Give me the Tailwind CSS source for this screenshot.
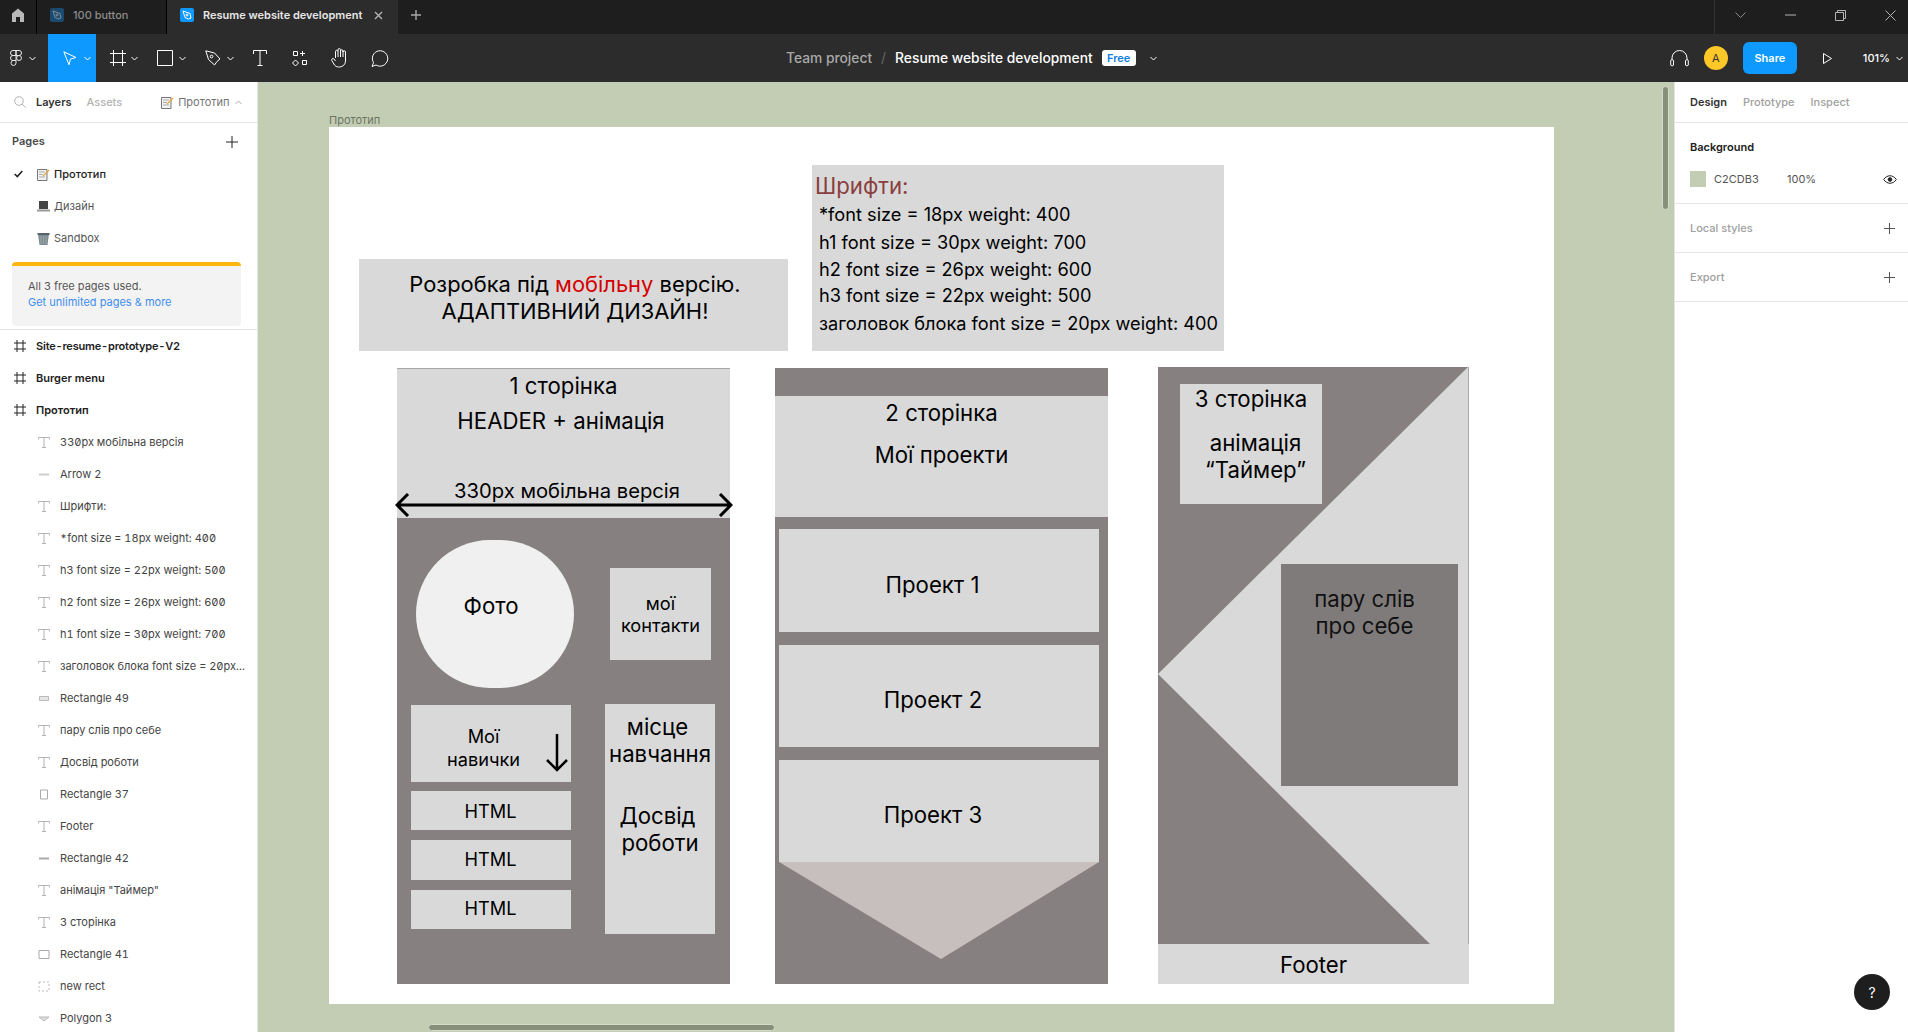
<!DOCTYPE html>
<html lang="uk">
<head>
  <meta charset="UTF-8" />
  <title>Resume website development – Figma</title>
  <script src="https://cdn.jsdelivr.net/npm/@tailwindcss/browser@4"></script>
</head>
<body class="h-screen w-screen overflow-hidden flex flex-col bg-white font-['Inter','Liberation_Sans',sans-serif] text-[11px] text-[#333]">

  <!-- tab bar -->
  <div class="h-[34px] shrink-0 flex items-stretch bg-[#1e1e1e] text-[11px]">
    <div class="w-[36px] flex items-center justify-center border-r border-[#000] box-content pb-[4px]">
      <svg width="14" height="14" viewBox="0 0 14 14"><path d="M7 .5 13 5.5V14H9V9H5V14H1V5.5Z" fill="#b8b8b8"/></svg>
    </div>
    <div class="w-[130px] flex items-center pl-[13px] border-r border-[#000] text-[#8c8c8c] font-medium pb-[4px]">
      <span class="w-[14px] h-[14px] rounded-[2px] bg-[#1c4a6e] flex items-center justify-center">
        <svg width="10" height="10" viewBox="0 0 10 10" fill="none" stroke="#7d8e9b"><path d="M1 1 8 3.5 9 8 6.5 9 3 7.5Z"/><circle cx="5" cy="5" r="1"/></svg>
      </span>
      <span class="ml-[9px]">100 button</span>
    </div>
    <div class="w-[231px] flex items-center pl-[13px] bg-[#2c2c2c] text-[#e6e6e6] font-semibold pb-[4px]">
      <span class="w-[14px] h-[14px] rounded-[2px] bg-[#0d99ff] flex items-center justify-center">
        <svg width="10" height="10" viewBox="0 0 10 10" fill="none" stroke="#fff"><path d="M1 1 8 3.5 9 8 6.5 9 3 7.5Z"/><circle cx="5" cy="5" r="1"/></svg>
      </span>
      <span class="ml-[9px] w-[171px] whitespace-nowrap">Resume website development</span>
      <svg width="9" height="9" viewBox="0 0 9 9" stroke="#b3b3b3" stroke-width="1.4"><path d="M1 1 8 8M8 1 1 8"/></svg>
    </div>
    <div class="w-[35px] flex items-center justify-center pb-[4px]">
      <svg width="10" height="10" viewBox="0 0 10 10" stroke="#a8a8a8" stroke-width="1.4"><path d="M5 0V10M0 5H10"/></svg>
    </div>
    <div class="ml-auto w-[194px] border-l border-[#333] flex items-center gap-[39px] pl-[20px] pb-[4px]">
      <svg width="11" height="7" viewBox="0 0 11 7" fill="none" stroke="#8a8a8a"><path d="M.5 .5 5.5 5.5 10.5 .5"/></svg>
      <svg width="11" height="2" viewBox="0 0 11 2" stroke="#b3b3b3"><path d="M0 1H11"/></svg>
      <svg width="11" height="11" viewBox="0 0 11 11" fill="none" stroke="#b3b3b3"><path d="M.5 2.5H8.5V10.5H.5ZM2.5 2.5V.5H10.5V8.5H8.5"/></svg>
      <svg width="11" height="11" viewBox="0 0 11 11" stroke="#b3b3b3"><path d="M.5 .5 10.5 10.5M10.5 .5 .5 10.5"/></svg>
    </div>
  </div>

  <!-- toolbar -->
  <div class="h-[48px] shrink-0 flex items-center bg-[#2c2c2c] text-white">
    <div class="w-[48px] h-full flex items-center pl-[10px]">
      <svg width="12" height="16" viewBox="0 0 12 16" fill="none" stroke="#e6e6e6"><path d="M6 .5H3A2.5 2.5 0 0 0 3 5.5H6ZM6 .5H9A2.5 2.5 0 0 1 9 5.5H6ZM6 5.5H3A2.5 2.5 0 0 0 3 10.5H6ZM6 10.5H3A2.5 2.5 0 1 0 6 13ZM11.5 8A2.5 2.5 0 1 1 6.5 8 2.5 2.5 0 0 1 11.5 8Z"/></svg>
      <svg class="ml-[7px]" width="7" height="5" viewBox="0 0 7 5" fill="none" stroke="#fff"><path d="M.5 1 3.5 4 6.5 1"/></svg>
    </div>
    <div class="w-[48px] h-full bg-[#0d99ff] flex items-center pl-[15px]">
      <svg width="14" height="15" viewBox="0 0 14 15" fill="none" stroke="#fff"><path d="M.8 .8 13 6.5 7.5 8 6 13.8Z"/></svg>
      <svg class="ml-[7px]" width="7" height="5" viewBox="0 0 7 5" fill="none" stroke="#fff"><path d="M.5 1 3.5 4 6.5 1"/></svg>
    </div>
    <div class="w-[48px] h-full flex items-center pl-[14px]">
      <svg width="16" height="16" viewBox="0 0 16 16" stroke="#fff"><path d="M3.5 0V16M12.5 0V16M0 3.5H16M0 12.5H16"/></svg>
      <svg class="ml-[5px]" width="7" height="5" viewBox="0 0 7 5" fill="none" stroke="#fff"><path d="M.5 1 3.5 4 6.5 1"/></svg>
    </div>
    <div class="w-[48px] h-full flex items-center pl-[13px]">
      <svg width="16" height="16" viewBox="0 0 16 16" fill="none" stroke="#fff"><path d="M.5 .5H15.5V15.5H.5Z"/></svg>
      <svg class="ml-[6px]" width="7" height="5" viewBox="0 0 7 5" fill="none" stroke="#fff"><path d="M.5 1 3.5 4 6.5 1"/></svg>
    </div>
    <div class="w-[48px] h-full flex items-center pl-[13px]">
      <svg width="16" height="16" viewBox="0 0 16 16" fill="none" stroke="#fff"><path d="M.8 .8 9.5 3 15 9 12 11.5 9.5 15 3.5 9.5Z"/><circle cx="6.5" cy="6.5" r="1.4"/></svg>
      <svg class="ml-[6px]" width="7" height="5" viewBox="0 0 7 5" fill="none" stroke="#fff"><path d="M.5 1 3.5 4 6.5 1"/></svg>
    </div>
    <div class="w-[40px] h-full flex items-center justify-center">
      <svg width="14" height="16" viewBox="0 0 14 16" fill="none" stroke="#fff"><path d="M.5 4V.5H13.5V4M7 .5V15.5M4.5 15.5H9.5"/></svg>
    </div>
    <div class="w-[40px] h-full flex items-center justify-center">
      <svg width="16" height="16" viewBox="0 0 16 16" fill="none" stroke="#fff"><path d="M1.5 1.5H5.5V5.5H1.5ZM10.5 1V6M8 3.5H13M3.5 10 6.5 13 3.5 16 .5 13ZM10.5 10.5H14.5V14.5H10.5Z"/></svg>
    </div>
    <div class="w-[40px] h-full flex items-center justify-center">
      <svg width="18" height="20" viewBox="0 0 18 20" fill="none" stroke="#fff"><path d="M4.5 10V3.5A1.2 1.2 0 0 1 7 3.5V1.8A1.2 1.2 0 0 1 9.5 1.8V3A1.2 1.2 0 0 1 12 3V4A1.2 1.2 0 0 1 14.5 4V13A6 6 0 0 1 8.5 19H7.500A5 5 0 0 1 3.500 17L.8 12.500C0 11 2 9.800 3 11L4.500 13M7 3.500V9M9.500 2V9M12 3V9"/></svg>
    </div>
    <div class="w-[40px] h-full flex items-center justify-center">
      <svg width="18" height="17" viewBox="0 0 18 17" fill="none" stroke="#fff"><path d="M1 16.500 2.500 12.500A7.700 7.700 0 1 1 5 15Z" stroke-linejoin="round"/></svg>
    </div>
    <div class="ml-[386px] flex items-center text-[13.8px] font-medium whitespace-nowrap">
      <span class="text-[#a8a8a8]">Team project</span>
      <span class="text-[#666] mx-[9px] font-normal">/</span>
      <span class="text-white">Resume website development</span>
      <span class="ml-[9px] w-[34px] h-[16px] rounded-[3px] bg-white text-[#0d7de0] text-[11px] font-semibold flex items-center justify-center">Free</span>
      <svg class="ml-[14px]" width="7" height="5" viewBox="0 0 7 5" fill="none" stroke="#fff"><path d="M.5 1 3.5 4 6.5 1"/></svg>
    </div>
    <div class="ml-auto flex items-center">
      <svg width="19" height="18" viewBox="0 0 19 18" fill="none" stroke="#fff"><path d="M2 11V9A7.500 7.500 0 0 1 17 9V11M.7 11.500C.7 10.500 3.500 10.500 3.500 11.500V16C3.500 17 .7 17 .7 16ZM15.500 11.500C15.500 10.500 18.300 10.500 18.300 11.500V16C18.300 17 15.500 17 15.500 16Z"/></svg>
      <span class="ml-[15px] w-[24px] h-[24px] rounded-full bg-[#ffc727] text-[#333] text-[11px] flex items-center justify-center">A</span>
      <span class="ml-[15px] w-[54px] h-[32px] rounded-[6px] bg-[#0d99ff] text-white font-semibold flex items-center justify-center">Share</span>
      <svg class="ml-[26px]" width="9" height="11" viewBox="0 0 9 11" fill="none" stroke="#fff"><path d="M.5 .5 8.500 5.500 .5 10.500Z"/></svg>
      <span class="ml-[31px] font-medium">101%</span>
      <svg class="ml-[6px] mr-[5px]" width="7" height="5" viewBox="0 0 7 5" fill="none" stroke="#fff"><path d="M.5 1 3.5 4 6.5 1"/></svg>
    </div>
  </div>

  <!-- body -->
  <div class="flex-1 min-h-0 flex">

    <!-- left panel -->
    <aside class="w-[258px] shrink-0 border-r border-[#e5e5e5] bg-white overflow-hidden">
      <div class="h-[41px] flex items-center border-b border-[#e5e5e5] pl-[14px]">
        <svg width="12" height="12" viewBox="0 0 12 12" fill="none" stroke="#b3b3b3"><circle cx="5" cy="5" r="4.300"/><path d="M8 8 11.500 11.500"/></svg>
        <span class="ml-[10px] font-semibold text-[#333]">Layers</span>
        <span class="ml-[15px] font-medium text-[#b3b3b3]">Assets</span>
        <svg class="ml-[39px]" width="13" height="13" viewBox="0 0 13 13"><path d="M.5 1.500H10V12.500H.5Z" fill="#f2f2f2" stroke="#777"/><path d="M2 4H8M2 6.500H6M2 9H8" stroke="#aaa"/><path d="M5.500 8 11.500 1.500 12.500 2.500 6.500 8.500Z" fill="#e8a33d"/></svg>
        <span class="ml-[4px] text-[#757575]">Прототип</span>
        <svg class="ml-[5px]" width="7" height="5" viewBox="0 0 7 5" fill="none" stroke="#aaa"><path d="M.5 4 3.500 1 6.500 4"/></svg>
      </div>

      <div class="h-[35px] flex items-center justify-between pl-[12px] pr-[19px] pt-[2px] font-semibold text-[#4a4a4a]">
        <span>Pages</span>
        <svg width="12" height="12" viewBox="0 0 12 12" stroke="#222"><path d="M6 0V12M0 6H12"/></svg>
      </div>
      <div class="h-[32px] flex items-center pl-[14px] text-[#222]">
        <svg width="9" height="8" viewBox="0 0 9 8" fill="none" stroke="#222" stroke-width="1.600"><path d="M.7 4 3.300 6.500 8.300 1"/></svg>
        <svg class="ml-[14px]" width="13" height="13" viewBox="0 0 13 13"><path d="M.5 1.500H10V12.500H.5Z" fill="#f2f2f2" stroke="#777"/><path d="M2 4H8M2 6.500H6M2 9H8" stroke="#aaa"/><path d="M5.500 8 11.500 1.500 12.500 2.500 6.500 8.500Z" fill="#e8a33d"/></svg>
        <span class="ml-[4px] font-medium">Прототип</span>
      </div>
      <div class="h-[32px] flex items-center pl-[37px] text-[#555]">
        <svg width="13" height="11" viewBox="0 0 13 11"><path d="M2 0H11V8H2Z" fill="#444"/><path d="M0 8.500H13V10.500H0Z" fill="#999"/></svg>
        <span class="ml-[4px]">Дизайн</span>
      </div>
      <div class="h-[32px] flex items-center pl-[37px] text-[#555]">
        <svg width="13" height="13" viewBox="0 0 13 13"><path d="M1 1.500H12L10.500 13H2.500Z" fill="#7c8a8f"/><path d="M.5 1H12.500V3H.5Z" fill="#55656b"/><path d="M4 4V12M6.500 4V12M9 4V12" stroke="#b5bfc2" stroke-width=".6"/></svg>
        <span class="ml-[4px]">Sandbox</span>
      </div>
      <div class="mt-[8px] ml-[12px] w-[229px] h-[64px] rounded-[4px] bg-[#f3f3f3] border-t-[4px] border-[#ffb70f] pl-[16px] pt-[12px] leading-[16px]">
        <p class="text-[#555]">All 3 free pages used.</p>
        <p class="text-[#3f8ef0]">Get unlimited pages &amp; more</p>
      </div>
      <div class="mt-[3px] border-t border-[#e5e5e5]"></div>

      <div class="slashed-zero tabular-nums whitespace-nowrap text-[#444]">
        <div class="h-[32px] flex items-center pl-[14px] font-semibold text-[#222] tracking-[-0.2px]">
          <svg class="mr-[10px]" width="12" height="12" viewBox="0 0 12 12" stroke="#222"><path d="M3 0V12M9 0V12M0 3H12M0 9H12"/></svg>Site-resume-prototype-V2
        </div>
        <div class="h-[32px] flex items-center pl-[14px] font-semibold text-[#222]">
          <svg class="mr-[10px]" width="12" height="12" viewBox="0 0 12 12" stroke="#222"><path d="M3 0V12M9 0V12M0 3H12M0 9H12"/></svg>Burger menu
        </div>
        <div class="h-[32px] flex items-center pl-[14px] font-semibold text-[#222]">
          <svg class="mr-[10px]" width="12" height="12" viewBox="0 0 12 12" stroke="#222"><path d="M3 0V12M9 0V12M0 3H12M0 9H12"/></svg>Прототип
        </div>
        <div class="h-[32px] flex items-center pl-[38px]">
          <svg class="mr-[10px]" width="12" height="11" viewBox="0 0 12 11" fill="none" stroke="#b3b3b3"><path d="M.5 2.500V.5H11.500V2.500M6 .5V10.500M4 10.500H8"/></svg>330рх мобільна версія
        </div>
        <div class="h-[32px] flex items-center pl-[38px]">
          <svg class="mr-[10px]" width="12" height="11" viewBox="0 0 12 11" fill="none" stroke="#ccc" stroke-width="2"><path d="M1 5.500H11"/></svg>Arrow 2
        </div>
        <div class="h-[32px] flex items-center pl-[38px]">
          <svg class="mr-[10px]" width="12" height="11" viewBox="0 0 12 11" fill="none" stroke="#b3b3b3"><path d="M.5 2.500V.5H11.500V2.500M6 .5V10.500M4 10.500H8"/></svg>Шрифти:
        </div>
        <div class="h-[32px] flex items-center pl-[38px]">
          <svg class="mr-[10px]" width="12" height="11" viewBox="0 0 12 11" fill="none" stroke="#b3b3b3"><path d="M.5 2.500V.5H11.500V2.500M6 .5V10.500M4 10.500H8"/></svg>*font size = 18px weight: 400
        </div>
        <div class="h-[32px] flex items-center pl-[38px]">
          <svg class="mr-[10px]" width="12" height="11" viewBox="0 0 12 11" fill="none" stroke="#b3b3b3"><path d="M.5 2.500V.5H11.500V2.500M6 .5V10.500M4 10.500H8"/></svg>h3 font size = 22px weight: 500
        </div>
        <div class="h-[32px] flex items-center pl-[38px]">
          <svg class="mr-[10px]" width="12" height="11" viewBox="0 0 12 11" fill="none" stroke="#b3b3b3"><path d="M.5 2.500V.5H11.500V2.500M6 .5V10.500M4 10.500H8"/></svg>h2 font size = 26px weight: 600
        </div>
        <div class="h-[32px] flex items-center pl-[38px]">
          <svg class="mr-[10px]" width="12" height="11" viewBox="0 0 12 11" fill="none" stroke="#b3b3b3"><path d="M.5 2.500V.5H11.500V2.500M6 .5V10.500M4 10.500H8"/></svg>h1 font size = 30px weight: 700
        </div>
        <div class="h-[32px] flex items-center pl-[38px]">
          <svg class="mr-[10px]" width="12" height="11" viewBox="0 0 12 11" fill="none" stroke="#b3b3b3"><path d="M.5 2.500V.5H11.500V2.500M6 .5V10.500M4 10.500H8"/></svg>заголовок блока font size = 20px...
        </div>
        <div class="h-[32px] flex items-center pl-[38px]">
          <svg class="mr-[10px]" width="12" height="11" viewBox="0 0 12 11" fill="#e6e6e6" stroke="#bbb"><path d="M1.500 3.500H10.500V7.500H1.500Z"/></svg>Rectangle 49
        </div>
        <div class="h-[32px] flex items-center pl-[38px]">
          <svg class="mr-[10px]" width="12" height="11" viewBox="0 0 12 11" fill="none" stroke="#b3b3b3"><path d="M.5 2.500V.5H11.500V2.500M6 .5V10.500M4 10.500H8"/></svg>пару слів про себе
        </div>
        <div class="h-[32px] flex items-center pl-[38px]">
          <svg class="mr-[10px]" width="12" height="11" viewBox="0 0 12 11" fill="none" stroke="#b3b3b3"><path d="M.5 2.500V.5H11.500V2.500M6 .5V10.500M4 10.500H8"/></svg>Досвід роботи
        </div>
        <div class="h-[32px] flex items-center pl-[38px]">
          <svg class="mr-[10px]" width="12" height="11" viewBox="0 0 12 11" fill="none" stroke="#aaa"><path d="M2.500 1H9.500V10H2.500Z"/></svg>Rectangle 37
        </div>
        <div class="h-[32px] flex items-center pl-[38px]">
          <svg class="mr-[10px]" width="12" height="11" viewBox="0 0 12 11" fill="none" stroke="#b3b3b3"><path d="M.5 2.500V.5H11.500V2.500M6 .5V10.500M4 10.500H8"/></svg>Footer
        </div>
        <div class="h-[32px] flex items-center pl-[38px]">
          <svg class="mr-[10px]" width="12" height="11" viewBox="0 0 12 11" fill="none" stroke="#aaa" stroke-width="2"><path d="M1 5.500H11"/></svg>Rectangle 42
        </div>
        <div class="h-[32px] flex items-center pl-[38px]">
          <svg class="mr-[10px]" width="12" height="11" viewBox="0 0 12 11" fill="none" stroke="#b3b3b3"><path d="M.5 2.500V.5H11.500V2.500M6 .5V10.500M4 10.500H8"/></svg>анімація "Таймер"
        </div>
        <div class="h-[32px] flex items-center pl-[38px]">
          <svg class="mr-[10px]" width="12" height="11" viewBox="0 0 12 11" fill="none" stroke="#b3b3b3"><path d="M.5 2.500V.5H11.500V2.500M6 .5V10.500M4 10.500H8"/></svg>3 сторінка
        </div>
        <div class="h-[32px] flex items-center pl-[38px]">
          <svg class="mr-[10px]" width="12" height="11" viewBox="0 0 12 11" fill="none" stroke="#aaa"><path d="M1 1.500H11V9.500H1Z"/></svg>Rectangle 41
        </div>
        <div class="h-[32px] flex items-center pl-[38px]">
          <svg class="mr-[10px]" width="12" height="11" viewBox="0 0 12 11" fill="none" stroke="#bbb" stroke-dasharray="2 2"><path d="M1 1H11V10H1Z"/></svg>new rect
        </div>
        <div class="h-[32px] flex items-center pl-[38px]">
          <svg class="mr-[10px]" width="12" height="11" viewBox="0 0 12 11" fill="#ddd" stroke="#bbb"><path d="M1 4H11L6 8Z"/></svg>Polygon 3
        </div>
      </div>
    </aside>

    <!-- canvas: frames sit at free positions on the artboard -->
    <main class="relative flex-1 min-w-0 bg-[#c2cdb3] overflow-hidden font-['Inter',sans-serif] text-black">
      <span class="absolute left-[71px] top-[30px] text-[11px] text-[#6c7463]">Прототип</span>
      <div class="absolute left-[71px] top-[45px] w-[1225px] h-[877px] bg-white">

        <!-- fonts note -->
        <div class="absolute left-[483px] top-[38px] w-[412px] h-[186px] bg-[#d9d9d9] text-[18.2px] leading-[28px] whitespace-nowrap pl-[7px]">
          <p class="-ml-[4px] mt-[6px] text-[22.2px] leading-[30px] text-[#8a3f3f]">Шрифти:</p>
          <p class="-mt-[1px]">*font size = 18px weight: 400</p>
          <p>h1 font size = 30px weight: 700</p>
          <p class="-mt-[1px]">h2 font size = 26px weight: 600</p>
          <p class="-mt-[2px]">h3 font size = 22px weight: 500</p>
          <p>заголовок блока font size = 20px weight: 400</p>
        </div>

        <!-- banner -->
        <div class="absolute left-[30px] top-[132px] w-[429px] h-[92px] bg-[#d9d9d9] text-center text-[21.9px] leading-[27px] pt-[12px] pl-[3px]">
          <p>Розробка під <span class="text-[#d40000]">мобільну</span> версію.</p>
          <p>АДАПТИВНИЙ ДИЗАЙН!</p>
        </div>

        <!-- page 1 -->
        <section class="absolute left-[68px] top-[241px] w-[333px] h-[616px] bg-[#878080]">
          <div class="relative h-[150px] bg-[#d9d9d9] border-t border-[#a8a8a8] text-center text-[22.2px]">
            <p class="pt-[3px] leading-[28px]">1 сторінка</p>
            <p class="mt-[7px] pr-[5px] leading-[28px]">HEADER + анімація</p>
            <p class="mt-[42px] pl-[7px] leading-[28px] text-[20.2px]">330px мобільна версія</p>
            <svg class="absolute -left-[2px] top-[124px]" width="338" height="24" viewBox="0 0 338 24" fill="none" stroke="#000" stroke-width="3"><path d="M2 12H336M13 1 2 12 13 23M325 1 336 12 325 23"/></svg>
          </div>
          <div class="absolute left-[19px] top-[172px] w-[158px] h-[148px] rounded-full bg-[#f0f0f0] flex justify-center pt-[52px] pr-[8px] text-[22.2px] leading-[28px]">Фото</div>
          <div class="absolute left-[213px] top-[200px] w-[101px] h-[92px] bg-[#d9d9d9] text-center text-[18.2px] leading-[22px] pt-[24px]">мої<br>контакти</div>
          <div class="absolute left-[14px] top-[337px] w-[160px] h-[77px] bg-[#d9d9d9] text-center text-[18.2px] leading-[23px] pt-[20px] pr-[15px]">Мої<br>навички
            <svg class="absolute left-[134px] top-[29px]" width="24" height="38" viewBox="0 0 24 38" fill="none" stroke="#000" stroke-width="2.500"><path d="M12 0V36M2 26 12 36 22 26"/></svg>
          </div>
          <div class="absolute left-[14px] top-[423px] w-[160px] h-[39px] bg-[#d9d9d9] flex items-center justify-center text-[18.2px] pt-[2px] pr-[1px]">HTML</div>
          <div class="absolute left-[14px] top-[472px] w-[160px] h-[40px] bg-[#d9d9d9] flex items-center justify-center text-[18.2px] pr-[1px]">HTML</div>
          <div class="absolute left-[14px] top-[522px] w-[160px] h-[39px] bg-[#d9d9d9] flex items-center justify-center text-[18.2px] pb-[1px] pr-[1px]">HTML</div>
          <div class="absolute left-[208px] top-[336px] w-[110px] h-[230px] bg-[#d9d9d9] text-center text-[22.2px] leading-[27px] pt-[9px]">
            <p class="pr-[5px]">місце</p>
            <p>навчання</p>
            <p class="mt-[35px] pr-[5px]">Досвід</p>
            <p>роботи</p>
          </div>
        </section>

        <!-- page 2 -->
        <section class="absolute left-[446px] top-[241px] w-[333px] h-[616px] bg-[#878080]">
          <div class="absolute left-0 top-[28px] w-full h-[121px] bg-[#d9d9d9] text-center text-[22.2px] leading-[28px] pt-[3px]">
            <p>2 сторінка</p>
            <p class="mt-[14px]">Мої проекти</p>
          </div>
          <div class="absolute left-[4px] top-[161px] w-[320px] h-[103px] bg-[#d9d9d9] flex items-center justify-center text-[22.2px] pr-[13px] pt-[9px]">Проект 1</div>
          <div class="absolute left-[4px] top-[277px] w-[320px] h-[102px] bg-[#d9d9d9] flex items-center justify-center text-[22.2px] pr-[12px] pt-[8px]">Проект 2</div>
          <div class="absolute left-[4px] top-[392px] w-[320px] h-[102px] bg-[#d9d9d9] flex items-center justify-center text-[22.2px] pr-[12px] pt-[8px]">Проект 3</div>
          <svg class="absolute left-[4px] top-[494px]" width="320" height="97" viewBox="0 0 320 97"><path d="M0 0H320L162 97Z" fill="#c7bfbd"/></svg>
        </section>

        <!-- page 3 -->
        <section class="absolute left-[829px] top-[240px] w-[311px] h-[617px] bg-[#d9d9d9] border-r border-[#aaa]">
          <svg class="absolute left-0 top-0" width="310" height="577" viewBox="0 0 310 577"><path d="M0 0H310L0 307ZM0 307V577H272Z" fill="#878080"/></svg>
          <div class="absolute left-[22px] top-[17px] w-[142px] h-[120px] bg-[#d9d9d9] text-center text-[22.2px] leading-[27px] pt-[1px] whitespace-nowrap">
            <p>3 сторінка</p>
            <p class="mt-[17px] pl-[9px]">анімація<br>“Таймер”</p>
          </div>
          <div class="absolute left-[123px] top-[197px] w-[177px] h-[222px] bg-[#807b7b] text-center text-[22.2px] leading-[27px] pt-[21px] pr-[10px] text-[#111]">пару слів<br>про себе</div>
          <div class="absolute left-0 top-[577px] w-[311px] h-[40px] bg-[#d9d9d9] flex items-center justify-center text-[22.2px] pt-[2px]">Footer</div>
        </section>
      </div>

      <!-- scrollbars -->
      <div class="absolute left-[1404px] top-[4px] w-[7px] h-[124px] rounded-full bg-[#878f7b] border border-[#d5dccb]"></div>
      <div class="absolute left-[170px] top-[942px] w-[347px] h-[7px] rounded-full bg-[#878f7b] border border-[#d5dccb]"></div>
    </main>

    <!-- right panel -->
    <aside class="relative w-[234px] shrink-0 border-l border-[#e5e5e5] bg-white">
      <div class="h-[41px] flex items-center border-b border-[#e5e5e5] pl-[15px] font-medium text-[#a0a0a0]">
        <span class="font-semibold text-[#333]">Design</span>
        <span class="ml-[16px]">Prototype</span>
        <span class="ml-[16px]">Inspect</span>
      </div>
      <div class="h-[81px] border-b border-[#e5e5e5] pl-[15px] pt-[16px]">
        <p class="font-semibold text-[#222] leading-[16px]">Background</p>
        <div class="mt-[16px] flex items-center pr-[11px] text-[#555]">
          <span class="w-[16px] h-[16px] bg-[#c2cdb3]"></span>
          <span class="ml-[8px] w-[73px]">C2CDB3</span>
          <span>100%</span>
          <svg class="ml-auto" width="14" height="9" viewBox="0 0 14 9" fill="none" stroke="#222"><path d="M.7 4.500C4 -.5 10 -.5 13.300 4.500 10 9.500 4 9.500 .7 4.500Z"/><circle cx="7" cy="4.500" r="1.800" fill="#222"/></svg>
        </div>
      </div>
      <div class="h-[49px] border-b border-[#e5e5e5] flex items-center justify-between pl-[15px] pr-[13px] font-medium text-[#a0a0a0]">
        <span>Local styles</span>
        <svg width="11" height="11" viewBox="0 0 11 11" stroke="#555"><path d="M5.500 0V11M0 5.500H11"/></svg>
      </div>
      <div class="h-[49px] border-b border-[#e5e5e5] flex items-center justify-between pl-[15px] pr-[13px] font-medium text-[#a0a0a0]">
        <span>Export</span>
        <svg width="11" height="11" viewBox="0 0 11 11" stroke="#555"><path d="M5.500 0V11M0 5.500H11"/></svg>
      </div>
      <div class="absolute right-[18px] bottom-[22px] w-[36px] h-[36px] rounded-full bg-[#1e1e1e] text-white text-[14px] flex items-center justify-center">?</div>
    </aside>
  </div>
</body>
</html>
